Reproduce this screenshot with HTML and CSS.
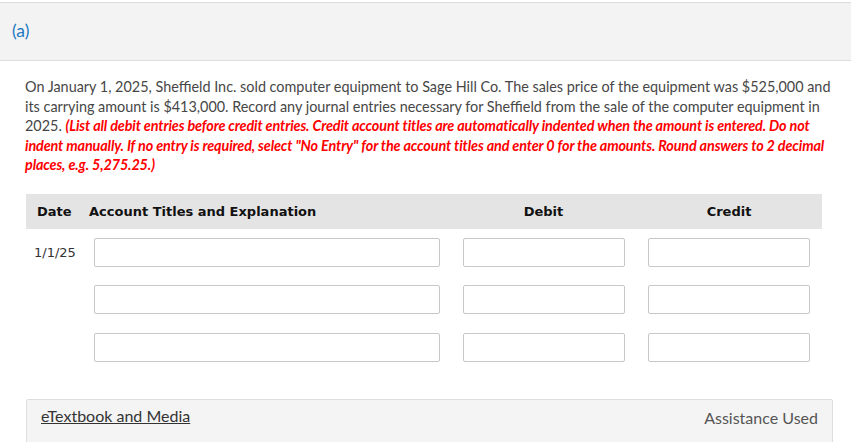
FILE: index.html
```html
<!DOCTYPE html>
<html>
<head>
  <meta charset="UTF-8" />
  <title>Journal Entry</title>
  <link rel="stylesheet" href="styles.css">
</head>
<body>
  <div class="part-bar">
    <span class="part-label">(a)</span>
  </div>

  <p class="question">
    On January 1, 2025, Sheffield Inc. sold computer equipment to Sage Hill Co. The sales price of the equipment was $525,000 and
    its carrying amount is $413,000. Record any journal entries necessary for Sheffield from the sale of the computer equipment in
    2025. <span class="hint">(List all debit entries before credit entries. Credit account titles are automatically indented when the amount is entered. Do not indent manually. If no entry is required, select "No Entry" for the account titles and enter 0 for the amounts. Round answers to 2 decimal places, e.g. 5,275.25.)</span>
  </p>

  <div class="journal">
    <div class="journal-head">
      <div class="col-date">Date</div>
      <div class="col-account">Account Titles and Explanation</div>
      <div class="col-amount">Debit</div>
      <div class="col-amount">Credit</div>
    </div>

    <div class="journal-row">
      <div class="col-date">1/1/25</div>
      <div class="col-account"><input type="text"></div>
      <div class="col-amount"><input type="text"></div>
      <div class="col-amount"><input type="text"></div>
    </div>
    <div class="journal-row">
      <div class="col-date"></div>
      <div class="col-account"><input type="text"></div>
      <div class="col-amount"><input type="text"></div>
      <div class="col-amount"><input type="text"></div>
    </div>
    <div class="journal-row">
      <div class="col-date"></div>
      <div class="col-account"><input type="text"></div>
      <div class="col-amount"><input type="text"></div>
      <div class="col-amount"><input type="text"></div>
    </div>
  </div>

  <div class="footer-bar">
    <a href="#" class="ebook-link">eTextbook and Media</a>
    <span class="assist">Assistance Used</span>
  </div>
</body>
</html>
```

FILE: styles.css
```css
body {
  margin: 0;
  background: #fff;
  font-family: Lato, 'Open Sans', sans-serif;
  color: #444;
}

.part-bar {
  margin-top: 2px;
  height: 57px;
  background: #f3f3f3;
  border-top: 1px solid #dcdcdc;
  border-bottom: 1px solid #dcdcdc;
  display: flex;
  align-items: center;
  padding-left: 12px;
}

.part-label {
  color: #1a78c2;
  font-size: 17.5px;
  margin-top: -3px;
}

.question {
  margin: 16px 0 0;
  padding: 0 16px 0 25px;
  font-size: 14.4px;
  line-height: 19.5px;
  color: #474747;
}

.hint {
  color: #f00;
  font-weight: bold;
  font-style: italic;
  letter-spacing: -0.13px;
}

.journal {
  margin: 19px 0 0 26px;
  width: 796px;
}

.journal-head,
.journal-row {
  display: grid;
  grid-template-columns: 58px 367px 185px 1fr;
  align-items: center;
}

.journal-head {
  height: 35px;
  background: #e4e4e4;
  font-family: 'DejaVu Sans', Verdana, sans-serif;
  font-weight: bold;
  font-size: 13px;
  color: #111;
}

.journal-head .col-date {
  padding-left: 11px;
}

.journal-head .col-account {
  padding-left: 5px;
}

.journal-head .col-amount {
  text-align: center;
}

.journal-row {
  height: 47.5px;
}

.journal-row .col-date {
  padding-left: 8px;
  font-family: 'DejaVu Sans', Verdana, sans-serif;
  font-size: 13px;
  color: #333;
}

.journal-row .col-account {
  padding: 0 11px 0 10px;
}

.journal-row .col-amount {
  display: flex;
  justify-content: center;
}

.journal-row input {
  box-sizing: border-box;
  height: 29px;
  width: 100%;
  border: 1px solid #c8c8c8;
  border-radius: 2px;
  background: #fff;
}

.journal-row .col-amount input {
  width: 162px;
}

.footer-bar {
  margin: 28px 0 0 26px;
  width: 807px;
  height: 50px;
  box-sizing: border-box;
  background: #f4f4f4;
  border: 1px solid #dedede;
  border-radius: 2px 2px 0 0;
  display: flex;
  justify-content: space-between;
  align-items: flex-start;
  padding: 6px 14px 0 14px;
  font-size: 16px;
}

.ebook-link {
  color: #333;
  text-decoration: underline;
}

.assist {
  color: #555;
  margin-top: 2px;
}
```
